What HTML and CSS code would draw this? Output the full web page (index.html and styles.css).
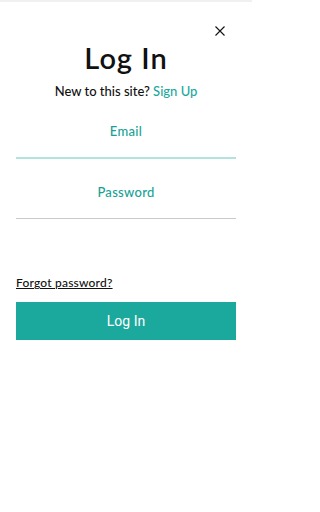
FILE: index.html
```html
<!DOCTYPE html>
<html lang="en">
<head>
<meta charset="utf-8">
<title>Log In</title>
<link rel="stylesheet" href="styles.css">
</head>
<body>
<div class="screen">
  <div class="topbar"></div>
  <div class="page">
    <div class="close-row">
      <button class="close" aria-label="Close">
        <svg width="10" height="10" viewBox="0 0 10 10"><path d="M0.5 0.5L9.5 9.5M9.5 0.5L0.5 9.5" stroke="#111" stroke-width="1.1" fill="none"/></svg>
      </button>
    </div>
    <h1 class="title">Log In</h1>
    <p class="subtitle">New to this site? <a class="signup" href="#">Sign Up</a></p>
    <div class="field field-active"><span class="label">Email</span></div>
    <div class="field"><span class="label">Password</span></div>
    <a class="forgot" href="#">Forgot password?</a>
    <button class="submit">Log In</button>
  </div>
</div>
</body>
</html>
```
FILE: styles.css
```css
html, body {
  margin: 0;
  padding: 0;
  background: #ffffff;
  font-family: Lato, "Open Sans", sans-serif;
  color: #111;
}
.screen {
  width: 252px;
}
.topbar {
  height: 2px;
  background: #eef0f2;
}
.page {
  display: flex;
  flex-direction: column;
  padding: 0 16px;
}
.close-row {
  display: flex;
  justify-content: flex-end;
  padding: 24px 11px 0 0;
}
.close {
  border: 0;
  background: none;
  padding: 0;
  width: 10px;
  height: 10px;
  display: block;
}
.close svg { display: block; }
.title {
  margin: 5px 0 0;
  font-size: 29px;
  line-height: 34px;
  font-weight: 600;
  text-align: center;
  letter-spacing: 1px;
}
.subtitle {
  margin: 8px 0 0;
  font-size: 13px;
  line-height: 16px;
  font-weight: 500;
  text-align: center;
  color: #111;
}
.signup {
  color: #1aa89c;
  text-decoration: none;
}
.field {
  margin-top: 24px;
  padding-bottom: 18px;
  border-bottom: 1px solid #c9c9c9;
  text-align: center;
}
.field-active {
  border-bottom: 2px solid #b4e2de;
}
.field + .field { margin-top: 25px; }
.label {
  display: block;
  font-size: 13px;
  line-height: 16px;
  font-weight: 500;
  color: #17a295;
  letter-spacing: 0.3px;
}
.forgot {
  margin-top: 56px;
  align-self: flex-start;
  font-size: 12px;
  line-height: 15px;
  font-weight: 500;
  color: #111;
  text-decoration: underline;
  letter-spacing: 0.2px;
}
.submit {
  margin-top: 12px;
  height: 38px;
  border: 0;
  background: #1aa99c;
  color: #fff;
  font-family: Roboto, "Liberation Sans", sans-serif;
  font-size: 14px;
  padding: 0;
}
```
